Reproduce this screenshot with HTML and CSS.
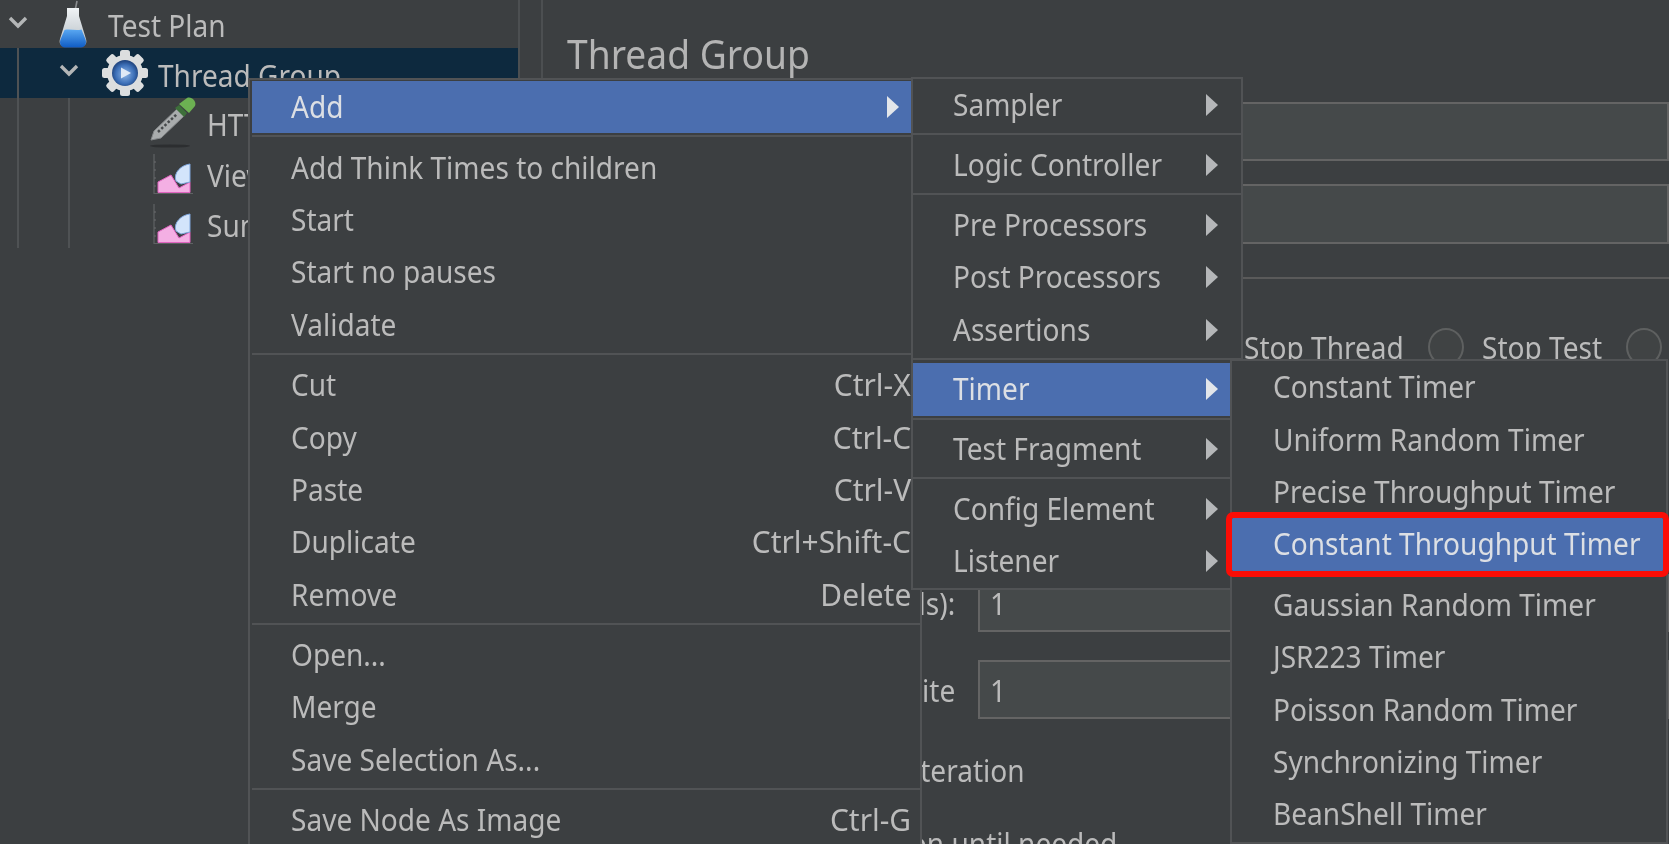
FILE: index.html
```html
<!DOCTYPE html>
<html lang="en">
<head>
<meta charset="utf-8">
<title>JMeter Thread Group menu</title>
<link rel="stylesheet" href="styles.css">
</head>
<body>
<div class="app">
  <aside class="tree">
    <i class="guide guide-a"></i><i class="guide guide-b"></i>
    <div class="node root">
      <svg class="chev" viewBox="0 0 20 14"><path d="M2 3l8 8 8-8" /></svg>
      <svg class="ico flask" viewBox="0 0 30 48"><defs><linearGradient id="fb" x1="0" y1="0" x2="0" y2="1"><stop offset="0" stop-color="#f0f3f5"/><stop offset="1" stop-color="#b4bdc4"/></linearGradient><linearGradient id="fl" x1="0" y1="0" x2="0" y2="1"><stop offset="0" stop-color="#5aa8f2"/><stop offset="1" stop-color="#0f5cc4"/></linearGradient></defs><path d="M19 1l-1.600 8" stroke="#8b8e90" stroke-width="1.600" fill="none"/><path d="M9 8h12v8l7 23c1.200 4-.5 7-4.500 7h-17C2.500 46 .8 43 2 39l7-23z" fill="url(#fb)"/><path d="M6.500 30c5-1.500 11 1 17-.5l4 10c1.500 4-.5 8-4.500 8H7c-4 0-6-4-4.500-8z" fill="url(#fl)"/></svg>
      <span class="lbl">Test Plan</span>
    </div>
    <div class="node sel">
      <svg class="chev" viewBox="0 0 20 14"><path d="M2 3l8 8 8-8" /></svg>
      <svg class="ico gear" viewBox="0 0 48 50"><defs><radialGradient id="gb" cx=".5" cy=".55" r=".55"><stop offset="0" stop-color="#8fb6e6"/><stop offset=".65" stop-color="#3d70b8"/><stop offset="1" stop-color="#1c3f78"/></radialGradient></defs><g fill="#dcdedf"><circle cx="24" cy="25" r="18"/><rect x="19" y="2" width="10" height="46" rx="2.500"/><rect x="19" y="2" width="10" height="46" rx="2.500" transform="rotate(45 24 25)"/><rect x="19" y="2" width="10" height="46" rx="2.500" transform="rotate(90 24 25)"/><rect x="19" y="2" width="10" height="46" rx="2.500" transform="rotate(135 24 25)"/></g><circle cx="24" cy="25" r="13" fill="url(#gb)"/><path d="M20 19.500l10 5.500-10 5.500z" fill="#dfe9f6"/></svg>
      <span class="lbl">Thread Group</span>
    </div>
    <div class="node leaf dropper">
      <svg class="ico drop" viewBox="0 0 48 52"><ellipse cx="20" cy="50" rx="20" ry="1.600" fill="#2c2e30"/><path d="M1 44l3-9L27 13l7 7-23 22z" fill="#a9acad" stroke="#85888a" stroke-width="1"/><path d="M8 36l19-18" stroke="#46494b" stroke-width="2.500" stroke-dasharray="2.500 2"/><path d="M25 12l4-3 8 8-3 4z" fill="#3d6f3a"/><path d="M29 8l8-6c4-2 10 3 8 8l-6 7z" fill="#6cb052"/></svg>
      <span class="lbl">HTTP Request</span>
    </div>
    <div class="node leaf chart">
      <svg class="ico graph" viewBox="0 0 40 42"><path d="M1 0v39.500h39" fill="none" stroke="#5f6264" stroke-width="1.200"/><path d="M1 8h2M1 16h2M1 24h2M1 32h2" stroke="#6a6d6f" stroke-width="1"/><path d="M5 38.500V28l13-7 8 13 11-6v10.500z" fill="#f4afe4" stroke="#e064c0" stroke-width="1"/><path d="M23 27c-3-8 5-16 14-17v18l-9 2z" fill="#d3e4fb" stroke="#7fa6dc" stroke-width="1"/></svg>
      <span class="lbl">View Results Tree</span>
    </div>
    <div class="node leaf chart">
      <svg class="ico graph" viewBox="0 0 40 42"><path d="M1 0v39.500h39" fill="none" stroke="#5f6264" stroke-width="1.200"/><path d="M1 8h2M1 16h2M1 24h2M1 32h2" stroke="#6a6d6f" stroke-width="1"/><path d="M5 38.500V28l13-7 8 13 11-6v10.500z" fill="#f4afe4" stroke="#e064c0" stroke-width="1"/><path d="M23 27c-3-8 5-16 14-17v18l-9 2z" fill="#d3e4fb" stroke="#7fa6dc" stroke-width="1"/></svg>
      <span class="lbl">Summary Report</span>
    </div>
  </aside>

  <main class="content">
    <h1 class="title"><span class="lbl">Thread Group</span></h1>
    <div class="field field-name"></div>
    <div class="field field-comment"></div>
    <div class="rule"></div>
    <div class="actions">
      <span class="lbl act-a">Stop Thread</span><i class="radio"></i>
      <span class="lbl act-b">Stop Test</span><i class="radio"></i>
    </div>
    <div class="form-row row-one">
      <div class="cap"><span class="lbl">Ramp-up period (seconds):</span></div>
      <div class="field short"><span class="lbl">1</span></div>
    </div>
    <div class="form-row row-two">
      <div class="cap"><span class="lbl">Loop Count: Infinite</span></div>
      <div class="field short"><span class="lbl">1</span></div>
    </div>
    <div class="note n-one"><span class="lbl">Same user on each iteration</span></div>
    <div class="note n-two"><span class="lbl">Delay Thread creation until needed</span></div>
  </main>
</div>

<nav class="menu menu-main">
  <div class="item on"><span class="lbl">Add</span><i class="arrow"></i></div>
  <hr class="sep">
  <div class="item"><span class="lbl">Add Think Times to children</span></div>
  <div class="item"><span class="lbl">Start</span></div>
  <div class="item"><span class="lbl">Start no pauses</span></div>
  <div class="item"><span class="lbl">Validate</span></div>
  <hr class="sep">
  <div class="item"><span class="lbl">Cut</span><span class="key lbl">Ctrl-X</span></div>
  <div class="item"><span class="lbl">Copy</span><span class="key lbl">Ctrl-C</span></div>
  <div class="item"><span class="lbl">Paste</span><span class="key lbl">Ctrl-V</span></div>
  <div class="item"><span class="lbl">Duplicate</span><span class="key lbl">Ctrl+Shift-C</span></div>
  <div class="item"><span class="lbl">Remove</span><span class="key lbl">Delete</span></div>
  <hr class="sep">
  <div class="item"><span class="lbl">Open...</span></div>
  <div class="item"><span class="lbl">Merge</span></div>
  <div class="item"><span class="lbl">Save Selection As...</span></div>
  <hr class="sep">
  <div class="item"><span class="lbl">Save Node As Image</span><span class="key lbl">Ctrl-G</span></div>
</nav>

<nav class="menu menu-add">
  <div class="item"><span class="lbl">Sampler</span><i class="arrow"></i></div>
  <hr class="sep">
  <div class="item"><span class="lbl">Logic Controller</span><i class="arrow"></i></div>
  <hr class="sep">
  <div class="item"><span class="lbl">Pre Processors</span><i class="arrow"></i></div>
  <div class="item"><span class="lbl">Post Processors</span><i class="arrow"></i></div>
  <div class="item"><span class="lbl">Assertions</span><i class="arrow"></i></div>
  <hr class="sep">
  <div class="item on"><span class="lbl">Timer</span><i class="arrow"></i></div>
  <hr class="sep">
  <div class="item"><span class="lbl">Test Fragment</span><i class="arrow"></i></div>
  <hr class="sep">
  <div class="item"><span class="lbl">Config Element</span><i class="arrow"></i></div>
  <div class="item"><span class="lbl">Listener</span><i class="arrow"></i></div>
</nav>

<nav class="menu menu-timer">
  <div class="item"><span class="lbl">Constant Timer</span></div>
  <div class="item"><span class="lbl">Uniform Random Timer</span></div>
  <div class="item"><span class="lbl">Precise Throughput Timer</span></div>
  <div class="item on marked"><span class="lbl">Constant Throughput Timer</span></div>
  <hr class="sep blank">
  <div class="item"><span class="lbl">Gaussian Random Timer</span></div>
  <div class="item"><span class="lbl">JSR223 Timer</span></div>
  <div class="item"><span class="lbl">Poisson Random Timer</span></div>
  <div class="item"><span class="lbl">Synchronizing Timer</span></div>
  <div class="item"><span class="lbl">BeanShell Timer</span></div>
</nav>
```

FILE: styles.css
```css
html, body {
  margin: 0;
  height: 100%;
  overflow: hidden;
  background: #3c3f41;
}
body {
  position: relative;
  width: 1669px;
  height: 844px;
  color: #bbbbbb;
  font-family: "Noto Sans", "Open Sans", sans-serif;
  font-size: 31px;
  line-height: 40px;
  filter: blur(0.55px);
}
.lbl {
  display: inline-block;
  white-space: nowrap;
  transform: scaleX(0.905);
  transform-origin: left center;
}

/* Shell */
.app {
  display: flex;
  height: 844px;
}
.tree {
  position: relative;
  flex: none;
  width: 518px;
  height: 100%;
  border-right: 2px solid #4c4f51;
}
.guide {
  position: absolute;
  width: 2px;
  background: #4f5254;
}
.guide-a { left: 17px; top: 48px; height: 200px; z-index: 1; }
.guide-b { left: 68px; top: 98px; height: 150px; z-index: 1; }

.node {
  display: flex;
  align-items: center;
  height: 50px;
}
.root { height: 48px; padding-left: 8px; }
.root .lbl { margin-top: 1px; }
.sel { height: 50px; padding-left: 59px; background: #0d293e; }
.sel .lbl { margin-top: 3px; }
.leaf { padding-left: 150px; }
.dropper { height: 52px; }
.chev {
  flex: none;
  width: 20px;
  height: 14px;
  fill: none;
  stroke: #b4b6b7;
  stroke-width: 3.4px;
}
.root .chev { margin-top: -4px; }
.sel .chev { margin-top: -6px; }
.ico { flex: none; }
.flask { width: 30px; height: 48px; margin: 0 20px 0 30px; }
.gear { width: 48px; height: 50px; margin: 0 9px 0 22px; }
.drop { width: 48px; height: 52px; margin: -4px 9px 0 0; }
.graph { width: 40px; height: 42px; margin: 0 14px 0 3px; }

.content {
  flex: 1;
  min-width: 0;
  margin-left: 21px;
  padding-left: 24px;
  border-left: 2px solid #4c4f51;
}
.title {
  margin: 0;
  height: 102px;
  padding-top: 29px;
  box-sizing: border-box;
  font-size: 40px;
  line-height: 50px;
  font-weight: 400;
  color: #b4b4b4;
}
.title .lbl { transform: scaleX(0.93); }
.field {
  box-sizing: border-box;
  border: 2px solid #646464;
  background: #45494a;
}
.field-name { height: 59px; }
.field-comment { height: 60px; margin-top: 23px; }
.rule { height: 2px; margin-top: 33px; background: #5a5a5a; }
.actions {
  display: flex;
  align-items: center;
  height: 44px;
  margin-top: 46px;
  padding-left: 677px;
}
.radio {
  flex: none;
  width: 36px;
  height: 38px;
  box-sizing: border-box;
  border: 2px solid #5e6060;
  border-radius: 50%;
  background: #404344;
}
.act-a { width: 184px; }
.act-b { width: 144px; margin-left: 18px; }
.form-row {
  display: flex;
  align-items: center;
}
.cap {
  flex: none;
  display: flex;
  justify-content: flex-end;
  width: 388px;
  margin-right: 23px;
}
.cap .lbl, .note .lbl { transform-origin: right center; }
.form-row .field {
  flex: 1;
  display: flex;
  align-items: center;
  padding-left: 10px;
}
.row-one { margin-top: 205px; height: 58px; }
.row-two { margin-top: 28px; height: 59px; }
.row-one .field { height: 58px; }
.row-two .field { height: 59px; }
.note { display: flex; justify-content: flex-end; height: 44px; }
.n-one { width: 458px; margin-top: 31px; }
.n-two { width: 550px; margin-top: 29px; }

/* Menus */
.menu {
  position: absolute;
  box-sizing: border-box;
  background: #3c3f41;
  border: 2px solid #515355;
}
.menu-main { left: 248px; top: 78px; width: 674px; height: 780px; padding: 1px 0 0 2px; z-index: 2; }
.menu-add { left: 911px; top: 77px; width: 332px; height: 513px; z-index: 3; }
.menu-timer { left: 1230px; top: 359px; width: 438px; height: 485px; z-index: 4; }
.item {
  position: relative;
  display: flex;
  align-items: center;
  justify-content: space-between;
  height: 52.4px;
  padding-left: 39px;
  padding-right: 9px;
}
.item .lbl { margin-top: -2px; }
.menu-add .item { padding-left: 40px; padding-right: 23px; }
.menu-timer .item { padding-left: 41px; }
.menu-main .item .key { transform: scaleX(0.965); transform-origin: right center; }
.item.on {
  background: #4b6eaf;
  color: #dcdfe4;
}
.item.marked {
  margin-right: 3px;
  outline: 6px solid #fb0d06;
  border-radius: 1px;
  z-index: 1;
}
.menu-main .item.on { padding-right: 21px; }
.sep {
  height: 2px;
  margin: 2px 0 4px;
  border: 0;
  background: #515355;
}
.menu-add .sep { margin-bottom: 3.4px; }
.sep.blank { background: transparent; }
.arrow {
  flex: none;
  width: 0;
  height: 0;
  border-left: 12px solid #b5b7b9;
  border-top: 11px solid transparent;
  border-bottom: 11px solid transparent;
}
.item.on .arrow { border-left-color: #e3e6ea; }
```
